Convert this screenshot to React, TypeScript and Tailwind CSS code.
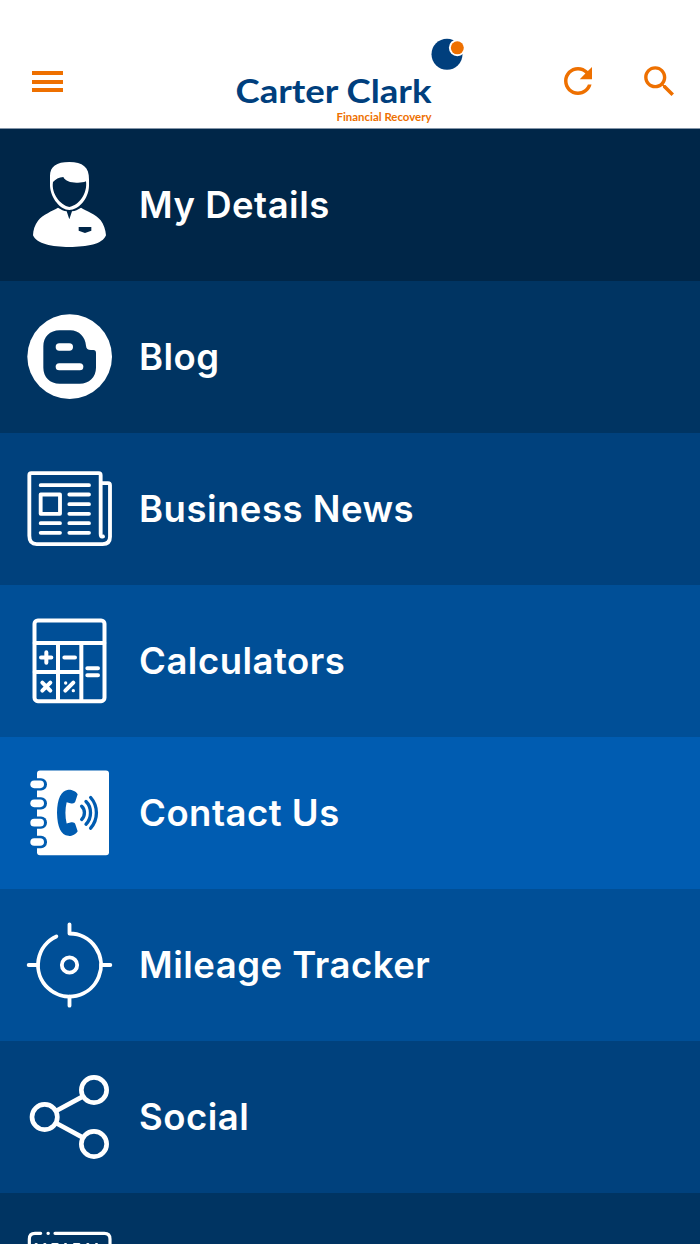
import React from 'react';

interface MenuItem {
  label: string;
  bg: string;
  icon: React.ReactNode;
}

const iconClass = 'ml-[15px] h-[110px] w-[110px] shrink-0';

function PersonIcon() {
  return (
    <svg viewBox="0 0 330 330" className={iconClass} fill="white">
      <path
        fillRule="evenodd"
        d="M105 78C105 50 124 36 163 36C203 36 223 52 222 88V108C221 146 191 180 163 180C137 180 107 145 105 108ZM114 96C121 88 132 82 145 81C151 94 169 99 189 98C198 98 206 97 213 94C218 130 192 166 163 171C137 166 108 131 114 96Z"
      />
      <path
        fillRule="evenodd"
        d="M129 173C138 179 147 183 155 184L158 193L163 208L168 193L171 184C180 183 189 179 198 173C213 183 243 192 257 211C266 223 272 240 273 256C263 283 216 291 163 291C111 291 65 282 54 256C54 240 60 224 69 212C83 194 113 182 129 173ZM191 231V242L210 249L229 242V231Z"
      />
    </svg>
  );
}

function BloggerIcon() {
  return (
    <svg viewBox="0 5 330 330" className={iconClass}>
      <circle cx="164" cy="169" r="127" fill="white" />
      <path
        d="M134 90H166C192 90 211 110 213 136C214 145 218 149 228 149H235Q243 149 243 158V202C243 230 222 250 194 250H134C105 250 85 230 85 202V138C85 110 105 90 134 90Z"
        fill="#003462"
      />
      <rect x="122" y="129" width="52" height="22" rx="11" fill="white" />
      <rect x="122" y="189" width="83" height="21" rx="10.5" fill="white" />
    </svg>
  );
}

function NewsIcon() {
  return (
    <svg viewBox="0 -3.5 330 330" className={iconClass} fill="none" stroke="white" strokeWidth="11.5" strokeLinecap="round" strokeLinejoin="round">
      <path d="M264 244C258 246 257 242 257 236V60Q257 54 251 54H49Q43 54 43 60V242Q43 267 65 267H263Q285 267 285 245V90Q285 84 279 84H262" />
      <path d="M77 90H222M163 118H222M163 147H222M163 176H222M163 204H222M163 233H222M77 204H135M77 233H135" />
      <rect x="77" y="118" width="58" height="58" />
    </svg>
  );
}

function CalculatorIcon() {
  return (
    <svg viewBox="0 3 330 330" className={iconClass} fill="none" stroke="white" strokeWidth="12" strokeLinecap="round" strokeLinejoin="round">
      <rect x="58.5" y="46.5" width="210" height="242" rx="10" />
      <path d="M59 114H268M129 114V288M199 114V288M59 201H199" />
      <path d="M94 142V173M78 157.5H109M148 157.5H180M217 190H249M217 211H249M82 233L106 257M106 233L82 257M151 257L175 233" />
      <circle cx="152" cy="234" r="5" fill="white" stroke="none" />
      <circle cx="175" cy="257" r="5" fill="white" stroke="none" />
    </svg>
  );
}

function ContactIcon() {
  const rings = [81, 138, 196, 254];

  return (
    <svg viewBox="0 2.5 330 330" className={iconClass}>
      <rect x="66" y="40" width="216" height="254" rx="9" fill="white" />
      {rings.map((y) => (
        <g key={y}>
          <rect x="42" y={y - 18} width="54" height="37" rx="18" fill="#005cb1" />
          <rect x="46" y={y - 11} width="41" height="23" rx="11.5" fill="white" />
        </g>
      ))}
      <path
        d="M160 98C169 97 183 102 188 111L181 133C179 138 174 140 166 138L155 135C150 155 150 178 155 199L166 196C174 194 179 196 181 201L188 222C183 232 169 237 160 236C138 234 127 211 126 167C127 124 138 101 160 98Z"
        fill="#005cb1"
      />
      <g fill="none" stroke="#005cb1" strokeWidth="10" strokeLinecap="round">
        <path d="M200 147C211 157 211 177 200 187" />
        <path d="M213 133C231 150 231 184 213 201" />
        <path d="M227 121C250 147 250 187 227 213" />
      </g>
    </svg>
  );
}

function TargetIcon() {
  return (
    <svg viewBox="0 0 330 330" className={iconClass} fill="none" stroke="white" strokeWidth="11.5" strokeLinecap="round" strokeLinejoin="round">
      <path d="M163.5 43V70.500A94.500 94.500 0 1 1 124 79.200" />
      <path d="M41 165H68M259 165H286M163.5 260V287" />
      <circle cx="163.5" cy="165" r="23" />
    </svg>
  );
}

function ShareIcon() {
  return (
    <svg viewBox="0 6 330 330" className={iconClass} fill="none" stroke="white" strokeWidth="14">
      <circle cx="89" cy="171" r="38" />
      <circle cx="237" cy="90" r="38" />
      <circle cx="237" cy="252" r="38" />
      <path d="M123 153L204 109M123 189L204 233" />
    </svg>
  );
}

function CalendarIcon() {
  return (
    <svg viewBox="0 0 330 330" className={iconClass} fill="none" stroke="white" strokeWidth="9.5" strokeLinecap="round">
      <path d="M77 58H60Q43 58 43 75V270Q43 287 60 287H268Q285 287 285 270V75Q285 58 268 58H120M99 58H100" />
      <path d="M63 92H64M89 92H90M113 92H127M151 92H152M178 92H192M218 92H219M244 92H245" />
    </svg>
  );
}

const items: MenuItem[] = [
  { label: 'My Details', bg: 'bg-[#002648]', icon: <PersonIcon /> },
  { label: 'Blog', bg: 'bg-[#003462]', icon: <BloggerIcon /> },
  { label: 'Business News', bg: 'bg-[#00417d]', icon: <NewsIcon /> },
  { label: 'Calculators', bg: 'bg-[#004f97]', icon: <CalculatorIcon /> },
  { label: 'Contact Us', bg: 'bg-[#005cb1]', icon: <ContactIcon /> },
  { label: 'Mileage Tracker', bg: 'bg-[#004f97]', icon: <TargetIcon /> },
  { label: 'Social', bg: 'bg-[#00417d]', icon: <ShareIcon /> },
  { label: '', bg: 'bg-[#003462]', icon: <CalendarIcon /> },
];

function Logo() {
  return (
    <svg viewBox="0 0 236 94" className="ml-[169px] mt-[34px] h-[94px] w-[236px]">
      <circle cx="215" cy="20.3" r="15.5" fill="#003f7d" />
      <circle cx="225.3" cy="13.8" r="8.4" fill="white" />
      <circle cx="225.3" cy="13.8" r="6.5" fill="#ee7000" />
      <text x="3.5" y="69" fontFamily="Lato, 'Noto Sans', sans-serif" fontWeight="700" fontSize="33" textLength="196" lengthAdjust="spacingAndGlyphs" fill="#003f7d">
        Carter Clark
      </text>
      <text x="104.5" y="87" fontFamily="Lato, 'Noto Sans', sans-serif" fontWeight="700" fontSize="10.5" textLength="95" lengthAdjust="spacingAndGlyphs" fill="#ee7000">
        Financial Recovery
      </text>
    </svg>
  );
}

export default function App() {
  return (
    <div className="h-[1244px] w-[700px] overflow-hidden bg-white font-['Inter','Liberation_Sans',sans-serif]">
      <header className="flex h-[129px] items-start border-b border-[#8495a8] bg-white text-[#ee7000]">
        <button aria-label="Menu" className="ml-8 mt-[71px] flex flex-col gap-[4.5px]">
          <span className="h-1 w-[31px] bg-current" />
          <span className="h-1 w-[31px] bg-current" />
          <span className="h-1 w-[31px] bg-current" />
        </button>
        <Logo />
        <button aria-label="Refresh" className="ml-[89px] mt-[60px]">
          <svg viewBox="0 0 24 24" className="h-[42px] w-[42px]" fill="currentColor">
            <path d="M17.65 6.35C16.2 4.9 14.21 4 12 4c-4.42 0-7.99 3.58-7.99 8s3.57 8 7.99 8c3.73 0 6.84-2.55 7.73-6h-2.08c-.82 2.33-3.04 4-5.65 4-3.31 0-6-2.69-6-6s2.69-6 6-6c1.66 0 3.14.69 4.22 1.78L13 11h7V4l-2.35 2.35z" />
          </svg>
        </button>
        <button aria-label="Search" className="ml-[39.5px] mt-[60.5px]">
          <svg viewBox="0 0 24 24" className="h-[41px] w-[41px]" fill="currentColor">
            <path d="M15.5 14h-.79l-.28-.27C15.41 12.59 16 11.11 16 9.5 16 5.91 13.09 3 9.5 3S3 5.91 3 9.5 5.91 16 9.5 16c1.61 0 3.09-.59 4.23-1.57l.27.28v.79l5 4.99L20.49 19l-4.99-5zm-6 0C7.01 14 5 11.99 5 9.5S7.01 5 9.5 5 14 7.01 14 9.5 11.99 14 9.5 14z" />
          </svg>
        </button>
      </header>
      <nav>
        {items.map((item, i) => (
          <div key={i} className={`flex h-[152px] items-center ${item.bg}`}>
            {item.icon}
            <span className="ml-[14px] text-[36.5px] font-semibold tracking-[0.5px] text-white">{item.label}</span>
          </div>
        ))}
      </nav>
    </div>
  );
}
